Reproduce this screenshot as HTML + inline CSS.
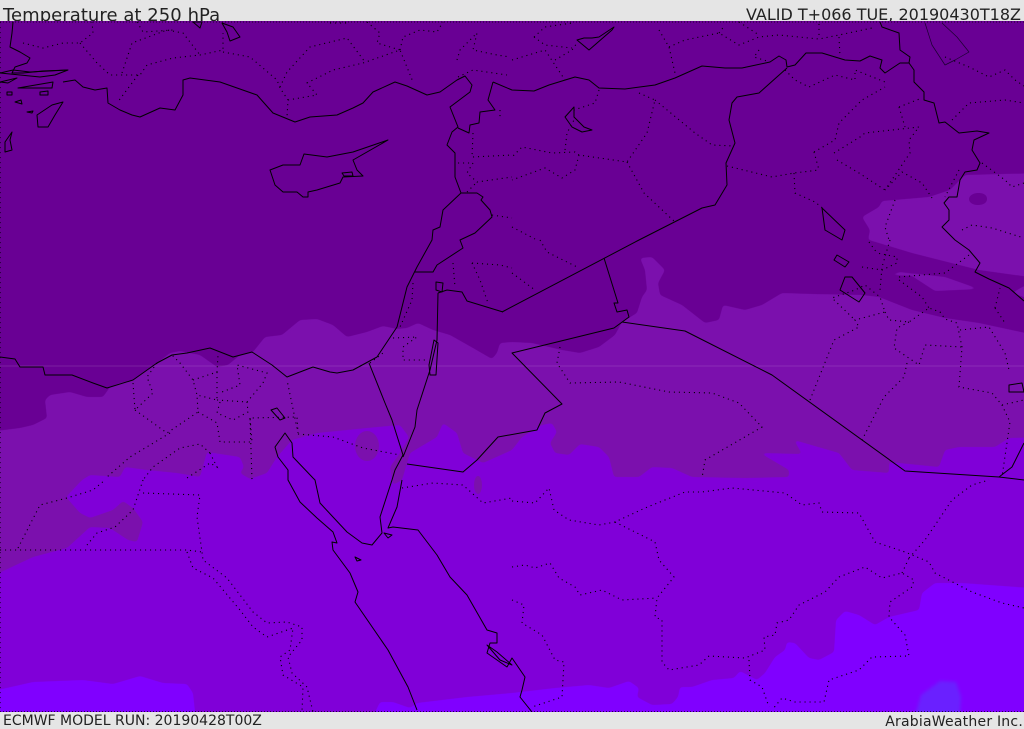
<!DOCTYPE html>
<html><head><meta charset="utf-8"><title>Temperature at 250 hPa</title>
<style>
html,body{margin:0;padding:0;background:#e5e5e5;}
#w{position:relative;width:1024px;height:729px;overflow:hidden;background:#e5e5e5;font-family:"DejaVu Sans",sans-serif;color:#222;}
svg{position:absolute;left:0;top:21px;}
.t{position:absolute;white-space:nowrap;line-height:1;}
.c{fill:none;stroke:#000;stroke-width:1;stroke-linejoin:round;}
.d{fill:none;stroke:#000;stroke-width:1.1;stroke-dasharray:1.1 3.9;}
.l{fill:none;stroke:#1a0030;stroke-width:.7;}
</style></head><body><div id="w">
<div class="t" style="left:3px;top:7px;font-size:18px;letter-spacing:.05px;">Temperature at 250 hPa</div>
<div class="t" style="right:3px;top:7px;font-size:16px;">VALID T+066 TUE, 20190430T18Z</div>
<div class="t" style="left:3px;top:714px;font-size:14px;">ECMWF MODEL RUN: 20190428T00Z</div>
<div class="t" style="right:1px;top:715px;font-size:14px;letter-spacing:.22px;">ArabiaWeather Inc.</div>
<svg width="1024" height="691" viewBox="0 21 1024 691">
<defs><filter id="s" filterUnits="userSpaceOnUse" x="-30" y="-10" width="1090" height="760" color-interpolation-filters="sRGB"><feGaussianBlur stdDeviation="1.6"/><feComponentTransfer><feFuncA type="linear" slope="6" intercept="-2.5"/></feComponentTransfer></filter></defs>
<rect x="0" y="21" width="1024" height="691" fill="#690094"/>
<g filter="url(#s)">
<path fill="#7b10ad" d="M-20 433L20 428L33 425L47 418L45 400L50 395L70 392L87 397L103 397L110 387L120 383L133 380L157 363L170 353L180 351L200 355L217 367L228 365L240 355L253 352L265 337L282 335L300 320L317 319L333 325L347 337L367 332L383 326L397 329L407 328L418 323L433 330L450 335L473 348L492 359L497 353L500 343L512 342L532 343L562 350L580 353L599 347L615 335L622 322L637 313L642 297L647 290L645 270L640 258L652 257L665 270L658 283L660 295L682 305L705 323L719 320L723 305L745 310L762 305L782 293L812 294L862 295L879 297L912 310L945 318L979 323L1044 337L1044 740L-20 740Z"/>
<path fill="#7b10ad" d="M862 217L879 207L882 201L929 197L950 190L965 175L1044 173L1044 279L979 270L912 253L869 240L868 240L870 230Z"/>
<path fill="#7b10ad" d="M888 275L912 276L935 291L979 289L945 277L900 272Z"/>
<path fill="#7b10ad" d="M1012 293L1024 286L1044 286L1044 304Z"/>
</g>
<path fill="#690094" d="M978 193C985 193 987 196 987 199C987 203 983 205 978 205C972 205 969 202 969 199C969 196 973 193 978 193Z"/>
<path filter="url(#s)" fill="#8000d8" d="M-20 582L33 557L67 548L90 527L110 528L128 540L137 542L143 522L133 508L123 501L113 510L90 518L80 513L66 497L82 480L90 475L120 477L125 467L147 470L177 473L200 477L207 452L240 457L244 467L240 473L250 479L267 473L277 457L292 440L317 433L367 428L400 425L409 437L400 453L390 467L393 485L402 480L410 453L437 437L443 423L457 433L463 453L483 463L512 450L522 437L542 425L552 423L557 432L550 443L555 453L569 455L580 444L599 447L609 457L614 477L639 477L652 467L672 468L692 477L745 478L789 477L789 470L760 453L802 454L794 440L839 453L852 470L889 473L889 462L939 467L945 450L959 447L995 447L1009 438L1044 437L1044 740L-20 740Z"/>
<ellipse cx="367" cy="446" rx="12" ry="15" fill="#7b10ad"/>
<ellipse cx="478" cy="485" rx="4" ry="9" fill="#7b10ad"/>
<g filter="url(#s)">
<path fill="#8000ff" d="M-20 694L33 682L83 680L113 684L140 676L163 683L187 684L193 693L198 740L-20 740Z"/>
<path fill="#8000ff" d="M362 740L380 702L393 702L410 708L417 703L467 697L512 693L555 688L589 685L609 688L629 681L639 688L637 697L652 705L672 704L678 697L680 687L692 687L712 680L734 678L740 671L757 680L765 673L775 657L785 650L787 642L795 643L809 658L819 660L834 652L836 620L845 611L859 615L875 625L889 617L919 610L922 593L935 583L962 583L1044 589L1044 740Z"/>
<path fill="#6a20ff" d="M908 740L921 695L940 681L956 682L961 697L958 740Z"/>
</g>
<path d="M0 366H1024" stroke="#fff" stroke-opacity=".12" stroke-width="1" fill="none"/>
<g class="d">
<path d="M23 43L43 48L63 43L80 43L93 33L92 22M80 43L97 63L110 75L140 75L147 65L173 58L200 55L223 50L223 33M122 73L132 43L167 30L183 33L200 55M138 75L117 103M223 52L250 57L277 80L280 88L288 100L287 117M288 100L317 95L307 83L333 70L363 63L400 50L413 82M280 87L287 72L310 47L347 38L365 62M400 50L403 37L420 30L437 32L443 22M458 77L473 70L507 75M457 60L460 50L477 33L473 50L497 55L510 57M367 22L380 33L377 43L400 50M330 23L347 23M137 22L143 32L173 30M500 110L500 117M473 133L472 157L512 155M458 163L473 163L467 173L477 182L512 177M467 192L477 182M492 215L512 218"/>
<path d="M512 60L545 50L555 65L565 80M555 60L572 50L577 43M534 37L545 27L572 23M534 37L545 45L572 48M669 47L685 40L719 33L739 45L759 37L779 35L819 39L839 35L872 28M659 30L669 47L675 73M719 33L725 25M739 22L759 35M839 37L840 57M819 35L819 22M759 50L754 57L770 62M599 90L595 103L574 110M639 93L655 100L647 133L627 162L579 155L575 152L552 153L522 147L512 157M579 155L575 170L562 178L545 168L512 180M565 150L567 133L574 120M655 100L695 133L712 145L734 146M627 162L644 193L675 222M512 227L535 239M727 166L772 177L794 173L819 170M794 173L795 193L815 202L825 210M814 152L835 140L839 123L862 100L885 87M814 152L819 170M834 153L860 137L865 133L919 127L909 140L910 153L885 190L902 172L922 183L932 198M837 160L859 173L885 190M899 107L922 98M899 107L905 127M952 120L969 103L1005 100L1024 103M785 70L795 80L809 87L835 75L855 80L855 70L885 82M945 57L969 67L989 77L1005 70L1015 80L1024 86M982 163L1005 180L1012 187L1024 183M959 170L945 197M895 200L885 227L889 240M962 230L972 225L992 228L1024 238"/>
<path d="M540 240L547 252L579 268M512 273L535 290M560 347L557 363L570 383L619 382L669 392L712 393L739 403L762 427L705 460L702 478M810 400L824 365L834 340L859 327L855 320L885 312L880 297L865 285L855 290L832 298L855 320M885 312L889 320L909 322L929 308L940 312L945 319L957 323L962 347L959 387L992 393L1002 405L1010 422L1002 477M909 322L897 328L894 348L919 365L925 345L962 347M907 363L904 377L884 397L862 440M960 330L989 327L1005 353L1009 370M1002 405L1024 400M899 277L945 273L969 255M862 267L882 270L897 263L897 257L877 253M869 242L877 253M890 240L882 267L880 290M995 308L1000 288M995 308L1005 323M899 280L922 297L929 308"/>
<path d="M157 363L147 377L153 393L135 410L133 383M135 410L167 433L198 412L197 395L193 380L180 363L172 355M193 380L217 372L218 355M217 372L217 400L197 395M217 400L247 402L263 383L267 373L237 365L240 385L222 392M220 402L217 413L233 420L248 412L247 402M198 412L212 420L217 423L220 442L252 442L250 418L297 417L298 433L287 380M250 418L252 480M170 433L130 457L107 477M210 453L200 444L180 448L153 467L143 480M210 453L217 467L210 463L187 478M298 434L333 437L363 448L400 455M413 283L412 300L400 327M393 338L417 337L403 347L403 360L428 360M370 363L383 353M453 263L455 287M472 263L480 280L488 303M472 263L500 265L512 268"/>
<path d="M0 22V712M0 550L187 550L202 552M18 548L40 505L67 498L93 490L105 480M143 480L133 510L115 527L97 533L87 545M143 493L200 495L197 517L202 552L203 560L227 578L253 612L267 623L287 622L302 627L302 640L288 657L292 673L307 687L313 712M187 552L193 568L213 578L240 610L253 627L267 637L293 628L290 650L280 657L283 675L303 687L302 712M402 488L433 483L463 485L483 503L512 498"/>
<path d="M512 501L535 503L549 488L554 510L569 520L599 525L615 522L645 508L685 492L702 492L732 488L785 493L802 505L819 503L822 512L859 513L875 542L905 552L929 562L935 573L972 592L1002 603L1024 608M615 522L655 542L659 560L674 577L657 598L655 617L662 620L662 662L669 670L699 665L709 656L745 658L765 650L764 637L775 635L777 623L789 620L799 605L825 592L839 577L865 567L882 578L902 573L914 580L912 587L890 602L889 617L905 635L909 656L872 657L859 670L829 680L824 702L795 702L782 698L772 710M749 660L750 680L762 687L769 707M909 558L925 540L952 500L972 485L989 480M902 573L909 558M512 567L525 565L535 568L550 563L559 578L575 587L580 595L602 590L622 600L657 598M512 600L524 605L522 623L542 635L555 660L564 662L562 697L532 707"/>
<path d="M0 22H1024M0 711.5H1024" stroke-dasharray="1 2" stroke-opacity=".7"/>
</g>
<g class="c">
<path d="M13 22L12 33L10 47L20 52L30 58L27 63L15 67L12 73L23 73L43 71L68 70M63 82L75 80L83 87L95 90L107 88L108 103L120 110L132 115L140 117L160 108L175 110L183 95L183 80L190 78L220 82L257 95L273 113L295 122L310 117L337 115L353 108L363 103L373 92L395 82L407 86L427 95L440 92L457 80L465 76L472 85L470 92L450 107L458 127L452 132L447 145L455 153L455 177L461 193L443 210L440 227L433 230L432 240L417 267L407 287L397 327L377 357L353 370L337 373L330 372L313 367L287 377L272 365L252 352L233 357L210 348L187 353L172 355L157 363L133 380L107 388L93 383L72 375L45 375L43 367L20 367L15 359L0 357"/>
<path d="M369 363L385 403L392 420L403 455L395 470L392 480L380 517L382 533L372 545L362 543L347 532L333 517L320 503L315 480L313 478L293 457L292 443L285 433L275 447L278 457L288 470L288 480L300 502L317 518L333 532L337 543L332 542L333 550L350 573L358 592L355 602L388 650L408 687L417 710"/>
<path d="M402 480L397 507L388 528L393 527L418 530L437 555L450 577L467 595L487 630L497 633L497 643L490 643L487 653L507 667L512 658L525 677L522 690L520 697L532 712"/>
<path d="M438 293L437 340L430 370L417 410L415 427L403 457M407 464L463 472L477 460L498 437L537 430L545 413L562 404L512 353L614 328L629 317L627 310L617 312L614 303L618 303L604 258M502 312L639 240L702 208L715 205L727 185L726 163L735 143L729 120L732 103L737 97L759 93L787 68M438 293L447 290L462 292L467 301L503 312"/>
<path d="M461 193L477 193L483 197L481 200L490 210L492 217L475 233L460 240L463 248L437 265L433 272L415 272"/>
<path d="M622 322L685 331L772 375L905 471L999 477L1024 480M999 477L1012 467L1024 443"/>
<path d="M493 82L512 90L534 91L549 85L575 77L589 80L599 88L625 89L655 85L675 78L702 66L725 68L742 68L770 62L779 56L786 60L787 67L795 65L806 53L822 53L845 60L860 61L870 56L882 60L880 68L885 73L900 63L909 63M493 82L488 100L495 110L480 112L479 123L470 125L469 133L458 128"/>
<path d="M880 22L882 27L899 33L900 50L910 57L909 63L914 70L914 82L924 92L924 100L934 103L939 123L945 122L959 133L977 131L989 133L974 140L972 150L980 163L977 170L965 172L960 180L957 197L949 197L944 203L949 210L949 220L942 227L955 240L969 250L980 263L975 272L989 279L1009 288L1024 301"/>
<path d="M270 170L283 165L300 165L304 154L327 157L353 152L388 140L353 160L357 170L363 176L343 177L340 183L317 190L308 192L308 197L303 197L297 192L283 192L275 185Z"/>
<path d="M342 173L352 172L353 176L344 176Z"/>
<path d="M63 102L52 105L37 115L38 127L48 127L55 115ZM12 132L5 142L5 152L12 150L10 140ZM18 88L53 82L52 88L33 88ZM0 82L17 78L8 83ZM222 23L233 27L240 37L230 41L227 32ZM193 22L200 28L202 22ZM0 73L13 70L30 72L68 70L55 75L40 77ZM7 92L12 92L12 95L7 95ZM15 102L21 100L22 104ZM27 112L33 111L32 113ZM40 92L48 91L48 95L40 95Z"/>
<path class="l" d="M925 23L932 45L945 65L955 60L969 52L957 37L942 23"/>
<path d="M574 107L565 117L572 127L582 132L592 130L584 127L574 117ZM577 40L589 50L612 30L614 27L599 37L592 38L584 38Z"/>
<path d="M837 255L849 262L845 267L834 260ZM845 277L840 290L859 302L865 293L852 277ZM822 208L845 230L842 240L825 230Z"/>
<path d="M1009 385L1022 383L1024 392L1009 392ZM436 282L443 283L442 292L436 290ZM429 365L434 340L438 343L436 375L430 375ZM271 410L277 408L285 418L280 420ZM487 645L497 652L512 665L500 660ZM355 557L361 560L357 561ZM384 533L392 535L388 538Z"/>
</g>
</svg>
</div></body></html>
